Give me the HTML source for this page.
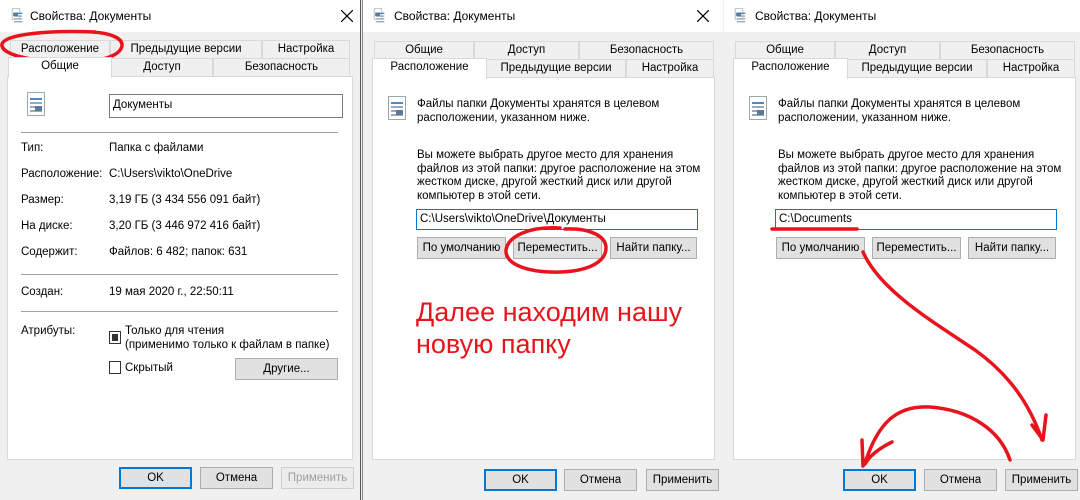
<!DOCTYPE html>
<html><head><meta charset="utf-8"><style>
*{margin:0;padding:0;box-sizing:border-box}
body{width:1080px;height:500px;overflow:hidden;background:#f0f0f0;font-family:"Liberation Sans",sans-serif;font-size:11.5px;color:#000;position:relative}
.a{position:absolute;white-space:nowrap}
.pan{position:absolute;top:0;height:500px;background:#f0f0f0;overflow:hidden}
.title{position:absolute;left:0;top:0;right:0;height:32px;background:#fff}
.tab{position:absolute;background:#f0f0f0;border:1px solid #d9d9d9;border-bottom:none;text-align:center;line-height:17px;height:19px}
.sel{background:#fff;z-index:2;height:21px}
.cont{position:absolute;background:#fff;border:1px solid #d9d9d9}
.btn{position:absolute;background:#e1e1e1;border:1px solid #adadad;text-align:center;height:22px;line-height:20px}
.ok{border:2px solid #0078d7;line-height:18px}
.inp{position:absolute;border:1px solid #7a7a7a;background:#fff;height:22px;line-height:20px;padding-left:3px}
.hr{position:absolute;height:1px;background:#a0a0a0}
.ico{position:absolute;width:18px;height:24px;border:1px solid #9aa;background:#fff}
.ico:before{content:"";position:absolute;left:2px;top:5px;width:12px;height:2px;background:#4a8ad0;box-shadow:0 4px 0 #9ab,0 8px 0 #9ab,0 12px 0 #9ab}
.ico:after{content:"";position:absolute;right:2px;bottom:4px;width:7px;height:5px;background:#5a7a9a}
.x{position:absolute;top:10px}
</style></head><body>

<!-- PANEL 1 -->
<div class="pan" style="left:0;width:361px;border-right:1px solid #555">
<div class="title"></div>
<div class="ico" style="left:10px;top:6px;width:12px;height:16px;transform:scale(.7)"></div>
<div class="a" style="left:30px;top:9px;font-size:12px">Свойства: Документы</div>
<svg class="x" style="left:341px" width="12" height="12" stroke="#000" stroke-width="1.2"><path d="M0,0L12,12M12,0L0,12"/></svg>
<div class="tab" style="left:10px;top:40px;width:100px">Расположение</div>
<div class="tab" style="left:110px;top:40px;width:152px">Предыдущие версии</div>
<div class="tab" style="left:262px;top:40px;width:88px">Настройка</div>
<div class="tab sel" style="left:8px;top:57px;width:104px">Общие</div>
<div class="tab" style="left:111px;top:58px;width:102px">Доступ</div>
<div class="tab" style="left:213px;top:58px;width:137px">Безопасность</div>
<div class="cont" style="left:7px;top:76px;width:346px;height:384px"></div>
<div class="ico" style="left:27px;top:92px"></div>
<div class="inp" style="left:109px;top:94px;width:234px;height:24px">Документы</div>
<div class="hr" style="left:21px;top:132px;width:317px"></div>
<div class="a" style="left:21px;top:142px">Тип:</div><div class="a" style="left:109px;top:142px">Папка с файлами</div>
<div class="a" style="left:21px;top:168px">Расположение:</div><div class="a" style="left:109px;top:168px">C:\Users\vikto\OneDrive</div>
<div class="a" style="left:21px;top:194px">Размер:</div><div class="a" style="left:109px;top:194px">3,19 ГБ (3 434 556 091 байт)</div>
<div class="a" style="left:21px;top:220px">На диске:</div><div class="a" style="left:109px;top:220px">3,20 ГБ (3 446 972 416 байт)</div>
<div class="a" style="left:21px;top:246px">Содержит:</div><div class="a" style="left:109px;top:246px">Файлов: 6 482; папок: 631</div>
<div class="hr" style="left:21px;top:274px;width:317px"></div>
<div class="a" style="left:21px;top:286px">Создан:</div><div class="a" style="left:109px;top:286px">19 мая 2020 г., 22:50:11</div>
<div class="hr" style="left:21px;top:311px;width:317px"></div>
<div class="a" style="left:21px;top:325px">Атрибуты:</div>
<div class="a" style="left:109px;top:331px;width:12px;height:13px;border:1px solid #333"><div style="margin:2px;width:6px;height:7px;background:#333"></div></div>
<div class="a" style="left:125px;top:325px">Только для чтения</div>
<div class="a" style="left:125px;top:339px">(применимо только к файлам в папке)</div>
<div class="a" style="left:109px;top:361px;width:12px;height:13px;border:1px solid #333"></div>
<div class="a" style="left:125px;top:362px">Скрытый</div>
<div class="btn" style="left:235px;top:358px;width:103px">Другие...</div>
<div class="btn ok" style="left:119px;top:467px;width:73px">OK</div>
<div class="btn" style="left:200px;top:467px;width:73px">Отмена</div>
<div class="btn" style="left:281px;top:467px;width:73px;color:#a0a0a0;border-color:#cfcfcf;background:#ececec">Применить</div>
</div>

<!-- PANEL 2 -->
<div class="pan" style="left:362px;width:361px;border-left:1px solid #888">
<div class="title"></div>
<div class="ico" style="left:9px;top:6px;width:12px;height:16px;transform:scale(.7)"></div>
<div class="a" style="left:31px;top:9px;font-size:12px">Свойства: Документы</div>
<svg class="x" style="left:334px" width="12" height="12" stroke="#000" stroke-width="1.2"><path d="M0,0L12,12M12,0L0,12"/></svg>
<div class="tab" style="left:11px;top:41px;width:100px">Общие</div>
<div class="tab" style="left:111px;top:41px;width:105px">Доступ</div>
<div class="tab" style="left:216px;top:41px;width:135px">Безопасность</div>
<div class="tab sel" style="left:9px;top:58px;width:115px">Расположение</div>
<div class="tab" style="left:123px;top:59px;width:140px">Предыдущие версии</div>
<div class="tab" style="left:263px;top:59px;width:88px">Настройка</div>
<div class="cont" style="left:9px;top:77px;width:343px;height:383px"></div>
<div class="ico" style="left:25px;top:96px"></div>
<div class="a" style="left:54px;top:97px;line-height:14px">Файлы папки Документы хранятся в целевом<br>расположении, указанном ниже.</div>
<div class="a" style="left:54px;top:149px;line-height:13.5px">Вы можете выбрать другое место для хранения<br>файлов из этой папки: другое расположение на этом<br>жестком диске, другой жесткий диск или другой<br>компьютер в этой сети.</div>
<div class="inp" style="left:53px;top:209px;width:282px;height:21px;border-color:#0078d7;line-height:19px">C:\Users\vikto\OneDrive\Документы</div>
<div class="btn" style="left:54px;top:237px;width:89px">По умолчанию</div>
<div class="btn" style="left:150px;top:237px;width:89px">Переместить...</div>
<div class="btn" style="left:247px;top:237px;width:87px">Найти папку...</div>
<div class="a" style="left:53px;top:296px;font-size:27px;color:#e8141c;line-height:32px">Далее находим нашу<br>новую папку</div>
<div class="btn ok" style="left:121px;top:469px;width:73px">OK</div>
<div class="btn" style="left:201px;top:469px;width:73px">Отмена</div>
<div class="btn" style="left:283px;top:469px;width:73px">Применить</div>
</div>

<!-- PANEL 3 -->
<div class="pan" style="left:724px;width:356px">
<div class="title"></div>
<div class="ico" style="left:9px;top:6px;width:12px;height:16px;transform:scale(.7)"></div>
<div class="a" style="left:31px;top:9px;font-size:12px">Свойства: Документы</div>
<div class="tab" style="left:11px;top:41px;width:100px">Общие</div>
<div class="tab" style="left:111px;top:41px;width:105px">Доступ</div>
<div class="tab" style="left:216px;top:41px;width:135px">Безопасность</div>
<div class="tab sel" style="left:9px;top:58px;width:115px">Расположение</div>
<div class="tab" style="left:123px;top:59px;width:140px">Предыдущие версии</div>
<div class="tab" style="left:263px;top:59px;width:88px">Настройка</div>
<div class="cont" style="left:9px;top:77px;width:343px;height:383px"></div>
<div class="ico" style="left:25px;top:96px"></div>
<div class="a" style="left:54px;top:97px;line-height:14px">Файлы папки Документы хранятся в целевом<br>расположении, указанном ниже.</div>
<div class="a" style="left:54px;top:149px;line-height:13.5px">Вы можете выбрать другое место для хранения<br>файлов из этой папки: другое расположение на этом<br>жестком диске, другой жесткий диск или другой<br>компьютер в этой сети.</div>
<div class="inp" style="left:51px;top:209px;width:282px;height:21px;border-color:#0078d7;line-height:19px">C:\Documents</div>
<div class="btn" style="left:52px;top:237px;width:89px">По умолчанию</div>
<div class="btn" style="left:148px;top:237px;width:89px">Переместить...</div>
<div class="btn" style="left:244px;top:237px;width:88px">Найти папку...</div>
<div class="btn ok" style="left:119px;top:469px;width:73px">OK</div>
<div class="btn" style="left:200px;top:469px;width:73px">Отмена</div>
<div class="btn" style="left:281px;top:469px;width:73px">Применить</div>
</div>

<svg class="a" style="left:0;top:0" width="1080" height="500" fill="none" stroke="#e8141c" stroke-width="3.5" stroke-linecap="round" stroke-linejoin="round">
<path d="M95,32 C50,30 5,34 2,44 C0,54 30,62 70,62 C105,62 120,55 122,46 C123,38 110,33 92,32"/>
<path d="M560,228 C530,226 508,236 506,250 C505,265 530,273 560,272 C592,271 606,260 606,248 C606,236 590,228 565,229"/>
<path d="M772,229 L857,229"/>
<path d="M863,252 C880,290 930,320 975,350 C1010,375 1030,405 1042,440 M1032,425 L1043,440 L1046,415"/>
<path d="M1010,460 C1000,430 970,410 930,407 C895,405 878,425 866,460 M862,440 L863,466 M865,464 C870,455 880,448 892,442"/>
</svg>
</body></html>
